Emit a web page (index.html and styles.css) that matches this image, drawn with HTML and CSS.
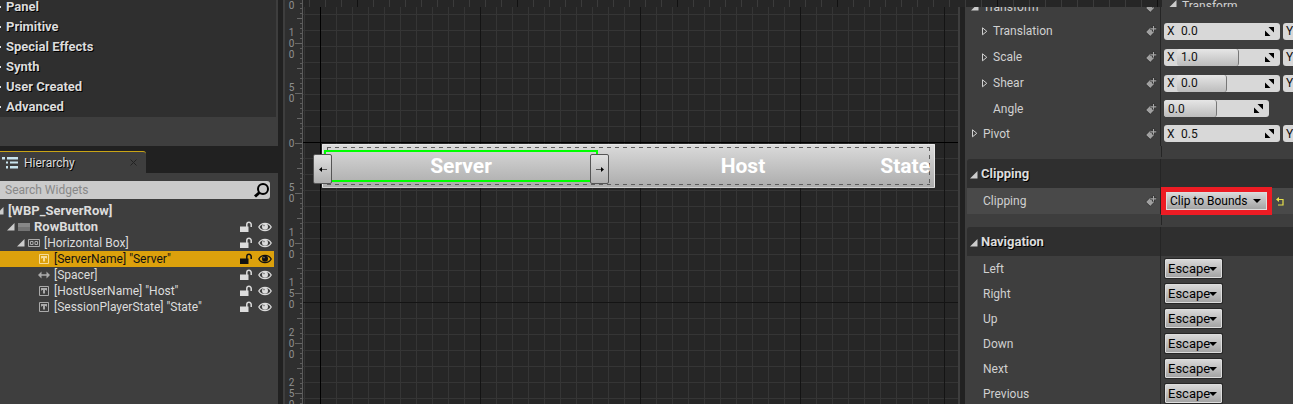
FILE: index.html
```html
<!DOCTYPE html>
<html lang="en">
<head>
<meta charset="utf-8">
<title>Widget Designer</title>
<link rel="stylesheet" href="styles.css">
</head>
<body>
<svg class="defs" aria-hidden="true">
  <symbol id="lock" viewBox="0 0 12 12"><path d="M0 5.500h8.500V11H0z" fill="currentColor"/><path d="M6.800 6V3.500a2.200 2.200 0 0 1 4.400 0V6" fill="none" stroke="currentColor" stroke-width="1.500"/></symbol>
  <symbol id="eye" viewBox="0 0 14 10"><path d="M.8 5C3.500 .2 10.500 .2 13.200 5 10.500 9.800 3.500 9.800 .8 5z" fill="none" stroke="currentColor" stroke-width="1.300"/><circle cx="7" cy="4.800" r="3" fill="currentColor"/><circle cx="6" cy="3.600" r=".8" fill="#777"/></symbol>
  <symbol id="text" viewBox="0 0 10 10"><path d="M.5.5h9v9h-9z" fill="none" stroke="currentColor"/><path d="M2 2h6v2.500H7V4H6v3.500H4V4H3v.5H2z" fill="currentColor"/></symbol>
  <symbol id="open" viewBox="0 0 8 8"><path d="M7.500 0v7.500H0z" fill="currentColor"/></symbol>
  <symbol id="closed" viewBox="0 0 6 9"><path d="M.5.800v7L4.800 4.300z" fill="none" stroke="currentColor"/></symbol>
  <symbol id="bind" viewBox="0 0 12 12"><path d="M.8 7 5.300 2.300H7V5.500h2.500V7L5.300 11.300z" fill="#a0a0a0" stroke="#222" stroke-width=".6"/><path d="M8.500 .8v6M5.500 3.800h6" stroke="#2a2a2a" stroke-width="2.600"/><path d="M8.500 1v5.500M5.800 3.800h5.500" stroke="#a8a8a8" stroke-width="1.200"/></symbol>
  <symbol id="spin" viewBox="0 0 9 9"><path d="M3.500 0H9v5.500zM0 3.500 5.500 9H0z" fill="#000"/></symbol>
</svg>
<div class="app">
  <aside class="side">
    <nav class="palette">
      <ul class="cats">
        <li>Panel</li><li>Primitive</li><li>Special Effects</li><li>Synth</li><li>User Created</li><li>Advanced</li>
      </ul>
    </nav>
    <div class="tabs">
      <div class="tab">
        <svg class="tab-icon" viewBox="0 0 16 12"><path d="M0 0h3v2.500H0zM5 0h11v2.500H5zM4 4.500h2v2H4zM8 4.500h8v2H8zM4 9h2v2.500H4zM8 9h8v2.500H8z" fill="#c8e4ee"/></svg>
        <span>Hierarchy</span>
        <button class="close" aria-label="Close"><svg viewBox="0 0 7 7"><path d="M.5.5l6 6m0-6l-6 6" stroke="#222" fill="none"/></svg></button>
      </div>
    </div>
    <section class="hierarchy">
      <label class="search">
        <input type="text" placeholder="Search Widgets" aria-label="Search Widgets">
        <svg viewBox="0 0 15 15"><circle cx="9" cy="6" r="5" fill="none" stroke="#000" stroke-width="2"/><path d="M5.500 9.500 1 13.500" stroke="#000" stroke-width="3"/></svg>
      </label>
      <div class="tree">
        <div class="node strong root"><svg class="tri"><use href="#open"/></svg><span>[WBP_ServerRow]</span></div>
        <div class="node strong lvl1"><svg class="tri"><use href="#open"/></svg><svg class="kind" viewBox="0 0 12 10"><path d="M0 1h12v8H0z" fill="#747474"/><path d="M0 1h12v4H0z" fill="#888"/></svg><span>RowButton</span><svg class="lock"><use href="#lock"/></svg><svg class="eye"><use href="#eye"/></svg></div>
        <div class="node lvl2"><svg class="tri"><use href="#open"/></svg><svg class="kind" viewBox="0 0 12 10"><path d="M.5 1.500h11v7H.5zM2.500 3.500h2.500v3H2.500zM7 3.500h2.500v3H7z" fill="none" stroke="#aaa"/></svg><span>[Horizontal Box]</span><svg class="lock"><use href="#lock"/></svg><svg class="eye"><use href="#eye"/></svg></div>
        <div class="node lvl3 selected"><svg class="kind"><use href="#text"/></svg><span>[ServerName] "Server"</span><svg class="lock"><use href="#lock"/></svg><svg class="eye"><use href="#eye"/></svg></div>
        <div class="node lvl3"><svg class="kind" viewBox="0 0 12 10"><path d="M0 5l3.500-3.500v2.700h5V1.500L12 5 8.500 8.500V5.800h-5v2.700z" fill="#aaa"/></svg><span>[Spacer]</span><svg class="lock"><use href="#lock"/></svg><svg class="eye"><use href="#eye"/></svg></div>
        <div class="node lvl3"><svg class="kind"><use href="#text"/></svg><span>[HostUserName] "Host"</span><svg class="lock"><use href="#lock"/></svg><svg class="eye"><use href="#eye"/></svg></div>
        <div class="node lvl3"><svg class="kind"><use href="#text"/></svg><span>[SessionPlayerState] "State"</span><svg class="lock"><use href="#lock"/></svg><svg class="eye"><use href="#eye"/></svg></div>
      </div>
    </section>
  </aside>

  <div class="ruler">
    <div class="marks">
      <span class="cut">0</span><span>1<br>0<br>0</span><span>5<br>0</span><span>0</span><span>5<br>0</span><span>1<br>0<br>0</span><span>1<br>5<br>0</span><span>2<br>0<br>0</span><span>2<br>5<br>0</span>
    </div>
  </div>

  <div class="work">
    <main class="canvas">
      <div class="widget">
        <div class="widget-row">
          <span class="server">Server</span>
          <span class="host">Host</span>
          <span class="state">State</span>
        </div>
        <div class="outline"></div>
        <button class="handle prev" aria-label="Move left"><svg viewBox="0 0 8 7"><path d="M2 3.500h6" stroke="#555"/><path d="M0 3.500 3 1v5z" fill="#000"/></svg></button>
        <button class="handle next" aria-label="Move right"><svg viewBox="0 0 8 7"><path d="M0 3.500h6" stroke="#555"/><path d="M8 3.500 5 1v5z" fill="#000"/></svg></button>
      </div>
    </main>

    <section class="details">
      <div class="row first"><div class="name"><svg class="tri"><use href="#open"/></svg><span>Transform</span><svg class="bind"><use href="#bind"/></svg></div><div class="value head-copy"><svg class="tri"><use href="#open"/></svg><span>Transform</span></div></div>
      <div class="row tall"><div class="name sub"><svg class="arrow"><use href="#closed"/></svg><label for="tx">Translation</label><svg class="bind"><use href="#bind"/></svg></div>
        <div class="value"><div class="num"><b>X</b><div class="field"><input id="tx" value="0.0"></div><svg><use href="#spin"/></svg></div><div class="num"><b>Y</b></div></div></div>
      <div class="row tall"><div class="name sub"><svg class="arrow"><use href="#closed"/></svg><label for="sx">Scale</label><svg class="bind"><use href="#bind"/></svg></div>
        <div class="value"><div class="num"><b>X</b><div class="field"><i style="width:60%"></i><input id="sx" value="1.0"></div><svg><use href="#spin"/></svg></div><div class="num"><b>Y</b></div></div></div>
      <div class="row tall"><div class="name sub"><svg class="arrow"><use href="#closed"/></svg><label for="hx">Shear</label><svg class="bind"><use href="#bind"/></svg></div>
        <div class="value"><div class="num"><b>X</b><div class="field"><i style="width:49%"></i><input id="hx" value="0.0"></div><svg><use href="#spin"/></svg></div><div class="num"><b>Y</b></div></div></div>
      <div class="row"><div class="name leaf"><label for="an">Angle</label><svg class="bind"><use href="#bind"/></svg></div>
        <div class="value"><div class="num single"><div class="field"><i style="width:50%"></i><input id="an" value="0.0"></div><svg><use href="#spin"/></svg></div></div></div>
      <div class="row"><div class="name pivot"><svg class="arrow"><use href="#closed"/></svg><label for="px">Pivot</label><svg class="bind"><use href="#bind"/></svg></div>
        <div class="value"><div class="num"><b>X</b><div class="field"><input id="px" value="0.5"></div><svg><use href="#spin"/></svg></div><div class="num"><b>Y</b></div></div></div>
      <div class="gap"></div>
      <h2 class="head"><svg class="tri"><use href="#open"/></svg>Clipping</h2>
      <div class="row tall lit"><div class="name"><label for="clip">Clipping</label><svg class="bind"><use href="#bind"/></svg></div>
        <div class="value"><div class="pick marked"><select id="clip"><option>Clip to Bounds</option></select></div><button class="reset" aria-label="Reset to default"><svg viewBox="0 0 8 9"><path d="M2 2.500h5V8H2" fill="none" stroke="#e6e04a" stroke-width="1.200"/><path d="M0 2.500 3 0v5z" fill="#e6e04a"/></svg></button></div></div>
      <div class="gap"></div>
      <h2 class="head"><svg class="tri"><use href="#open"/></svg>Navigation</h2>
      <div class="row"><div class="name"><label for="n1">Left</label></div><div class="value"><div class="pick small"><select id="n1"><option>Escape</option></select></div></div></div>
      <div class="row"><div class="name"><label for="n2">Right</label></div><div class="value"><div class="pick small"><select id="n2"><option>Escape</option></select></div></div></div>
      <div class="row"><div class="name"><label for="n3">Up</label></div><div class="value"><div class="pick small"><select id="n3"><option>Escape</option></select></div></div></div>
      <div class="row"><div class="name"><label for="n4">Down</label></div><div class="value"><div class="pick small"><select id="n4"><option>Escape</option></select></div></div></div>
      <div class="row"><div class="name"><label for="n5">Next</label></div><div class="value"><div class="pick small"><select id="n5"><option>Escape</option></select></div></div></div>
      <div class="row"><div class="name"><label for="n6">Previous</label></div><div class="value"><div class="pick small"><select id="n6"><option>Escape</option></select></div></div></div>
    </section>
    <div class="top-ruler"></div>
  </div>
</div>
</body>
</html>
```
FILE: styles.css
```css
* { box-sizing: border-box; }
body {
  margin: 0;
  background: #212121;
  color: #dcdcdc;
  font: 12px/16px Roboto, "Liberation Sans", sans-serif;
  overflow: hidden;
}
svg { display: block; flex: none; }
button { padding: 0; border: 0; background: none; }
.defs { position: absolute; width: 0; height: 0; }
.app { display: flex; height: 100vh; }

/* left column */
.side { flex: none; width: 278px; display: flex; flex-direction: column; }
.palette { background: #3e3e3e; padding: 0 2px 29px 0; overflow: hidden; }
.cats {
  list-style: none;
  margin: -3px 0 0;
  padding: 0;
  background: #2f2f2f;
  font-size: 13px;
  font-weight: bold;
  line-height: 20px;
  text-shadow: 1px 1px 0 #000;
}
.cats li { display: flex; align-items: center; gap: 5px; }
.cats li::before { content: ""; width: 1px; height: 2px; background: #ddd; }
.tabs { padding-top: 5px; }
.tab {
  width: 146px;
  height: 22px;
  display: flex;
  align-items: center;
  gap: 6px;
  padding: 0 9px 0 2px;
  background: #3e3e3e;
  border-top: 1px solid #c9a416;
  border-top-right-radius: 3px;
  text-shadow: 1px 1px 0 #000;
}
.tab-icon { width: 16px; height: 12px; }
.close { margin-left: auto; }
.close svg { width: 7px; height: 7px; }
.hierarchy { flex: 1; background: #3e3e3e; padding: 8px 4px 0 0; }
.search {
  display: flex;
  align-items: center;
  height: 18px;
  margin-right: 4px;
  padding: 0 1px 0 5px;
  background: #cbcbcb;
  border-radius: 0 3px 3px 0;
}
.search input {
  flex: 1;
  min-width: 0;
  padding: 0;
  border: 0;
  background: none;
  font: inherit;
}
.search input::placeholder { color: #888; opacity: 1; }
.search svg { width: 15px; height: 15px; }
.tree { padding-top: 4px; }
.node { display: flex; align-items: center; height: 16px; padding-right: 2px; white-space: nowrap; }
.node span { flex: 1; }
.strong { font-size: 13px; font-weight: bold; line-height: 18px; }
.root { gap: 4px; margin-left: -4px; }
.lvl1 { padding-left: 7px; }
.lvl2 { padding-left: 17px; }
.lvl3 { padding-left: 38px; }
.selected { background: #dca10c; color: #111; }
.selected .kind { color: #f6dc97; }
.tri { width: 8px; height: 8px; color: #ccc; }
.kind { width: 12px; height: 10px; margin: 0 4px 0 3px; color: #aaa; }
.lvl3 .kind { margin-left: 0; }
.lock { width: 12px; height: 12px; margin-right: 6px; }
.eye { width: 14px; height: 10px; }

/* vertical ruler */
.ruler {
  flex: none;
  width: 20px;
  margin-left: 5px;
  overflow: hidden;
  border-left: 2px solid #3e3e3e;
  border-right: 1px solid #5c5c5c;
  background-color: #2f2f2f;
  background-image:
    linear-gradient(#666 1px, transparent 1px),
    linear-gradient(#666 1px, transparent 1px),
    linear-gradient(#5c5c5c 1px, transparent 1px);
  background-size: 7px 50px, 5px 25px, 2px 5px;
  background-position: right 43px, right 18px, right 3px;
  background-repeat: repeat-y;
}
.marks { width: 13px; color: #8f8f8f; font-size: 10px; line-height: 11px; text-align: center; }
.marks span { display: flex; height: 50px; align-items: center; justify-content: center; }
.marks .cut { height: 18px; align-items: flex-start; }

/* design surface */
.work { flex: 1; min-width: 0; display: flex; position: relative; }
.canvas {
  flex: 1;
  min-width: 0;
  position: relative;
  border-right: 2px solid #3e3e3e;
  background-color: #262626;
  background-image:
    linear-gradient(#000, #000),
    linear-gradient(#000, #000),
    linear-gradient(90deg, #141414 1px, transparent 1px),
    linear-gradient(#141414, #141414),
    linear-gradient(#141414 1px, transparent 1px),
    linear-gradient(90deg, #353535 1px, transparent 1px),
    linear-gradient(#353535 1px, transparent 1px);
  background-size: 1px 100%, 100% 1px, 160px 100%, 1px 100%, 100% 160px, 16px 100%, 100% 16px;
  background-position: 17px 0, 0 142px, 17px 0, 641px 0, 0 142px, 17px 0, 0 14px;
  background-repeat: no-repeat, no-repeat, repeat-x, no-repeat, repeat-y, repeat-x, repeat-y;
}
.widget {
  position: absolute;
  left: 19px;
  top: 144px;
  width: 613px;
  height: 44px;
  border: 1px solid #e8e8e8;
  border-bottom-color: #d0d0d0;
  border-radius: 1px;
  background: linear-gradient(#dadada, #acacac);
}
.widget-row {
  display: flex;
  align-items: center;
  height: 38px;
  margin: 2px 4px;
  background-image:
    repeating-linear-gradient(90deg, #5e5e5e 0 4px, transparent 4px 8px),
    repeating-linear-gradient(90deg, #5e5e5e 0 4px, transparent 4px 8px),
    repeating-linear-gradient(#5e5e5e 0 4px, transparent 4px 8px),
    repeating-linear-gradient(#5e5e5e 0 4px, transparent 4px 8px);
  background-size: 100% 1px, 100% 1px, 1px 100%, 1px 100%;
  background-position: top, bottom, left, right;
  background-repeat: no-repeat;
  color: #fff;
  font-size: 21px;
  line-height: 24px;
  font-weight: bold;
}
.server { width: 268px; text-align: center; }
.host { margin-left: auto; }
.state { margin-left: 115px; }
.outline { position: absolute; left: 1px; top: 5px; width: 274px; height: 32px; border: 2px solid #0f0; }
.handle {
  position: absolute;
  top: 9px;
  width: 19px;
  height: 30px;
  display: grid;
  place-items: center;
  border: 1px solid #555;
  border-radius: 2px;
  background: linear-gradient(#e0e0e0, #b0b0b0);
}
.handle svg { width: 8px; height: 7px; }
.prev { left: -10px; }
.next { left: 267px; }
.top-ruler {
  position: absolute;
  left: 0;
  right: 131px;
  top: 0;
  height: 7px;
  background:
    linear-gradient(90deg, #111 1px, transparent 1px) 54px 0 / 160px 7px,
    linear-gradient(90deg, #3b3b3b 1px, transparent 1px) 6px 0 / 16px 7px #262626;
}

/* details */
.details { flex: none; width: 328px; margin-left: 5px; background: #3e3e3e; padding-left: 2px; overflow: hidden; }
.row { display: flex; height: 25px; color: #d0d0d0; }
.tall { height: 26px; }
.first { height: 18px; align-items: flex-start; }
.name { flex: none; width: 194px; display: flex; align-items: center; padding: 0 3px 0 16px; border-right: 1px solid #252525; }
.name .bind { margin-left: auto; }
.bind { width: 12px; height: 12px; }
.first .name { height: 18px; padding: 0 3px 5px 4px; gap: 4px; }
.first .head-copy { height: 7px; align-items: flex-start; gap: 5px; padding-left: 8px; line-height: 13px; overflow: hidden; }
.sub { padding-left: 15px; }
.arrow { width: 6px; height: 9px; margin-right: 5px; }
.leaf { padding-left: 26px; }
.pivot { padding-left: 5px; }
.value { flex: 1; min-width: 0; display: flex; align-items: center; gap: 3px; padding-left: 3px; overflow: hidden; }
.num {
  flex: none;
  width: 116px;
  height: 17px;
  display: flex;
  align-items: center;
  padding-right: 6px;
  background: #d8d8d8;
  border-radius: 3px;
  color: #111;
}
.num b { width: 13px; padding-left: 3px; font-weight: normal; }
.num svg { position: relative; width: 9px; height: 9px; margin-left: auto; }
.single { width: 105px; }
.field { flex: 1; height: 17px; display: flex; min-width: 0; margin-right: -15px; position: relative; }
.field i {
  position: absolute;
  inset: 0 auto 0 0;
  border-right: 1px solid #777;
  border-radius: 3px;
  background: linear-gradient(#e6e6e6, #bcbcbc);
}
.field input { position: relative; width: 100%; padding: 0 4px; border: 0; background: none; color: inherit; font: inherit; }
.gap { height: 13px; display: flex; }
.gap::before { content: ""; width: 194px; height: 11px; border-right: 1px solid #252525; }
.head {
  display: flex;
  align-items: center;
  gap: 3px;
  height: 29px;
  margin: 0;
  padding-left: 3px;
  background: linear-gradient(#252525, #252525) 193px 0 / 1px 100% no-repeat #2f2f2f;
  border-top-left-radius: 3px;
  font-size: 13px;
  text-shadow: 1px 1px 0 #000;
}
.head .tri { margin-top: 2px; }
.lit { background: #494949; }
.lit .value { overflow: visible; padding-left: 5px; }
.pick { position: relative; flex: none; }
.pick::after {
  content: "";
  position: absolute;
  right: 6px;
  top: 7px;
  border: 4px solid transparent;
  border-top: 4px solid #000;
  border-bottom: 0;
  pointer-events: none;
}
.pick select {
  appearance: none;
  display: block;
  width: 101px;
  height: 18px;
  padding: 0 3px;
  border: 1px solid #ddd;
  border-radius: 1px;
  background: linear-gradient(#d8d8d8, #a4a4a4);
  color: #000;
  font: inherit;
}
.pick.marked select { border-radius: 0; outline: 5px solid #ed1c24; }
.small { padding-left: 1px; }
.pick.small select { width: 57px; height: 19px; padding: 0 2px; font-size: 13px; box-shadow: 0 0 0 1px #262626; }
.small::after { right: 5px; top: 8px; }
.reset { margin-left: 6px; }
.reset svg { width: 8px; height: 9px; }
```
